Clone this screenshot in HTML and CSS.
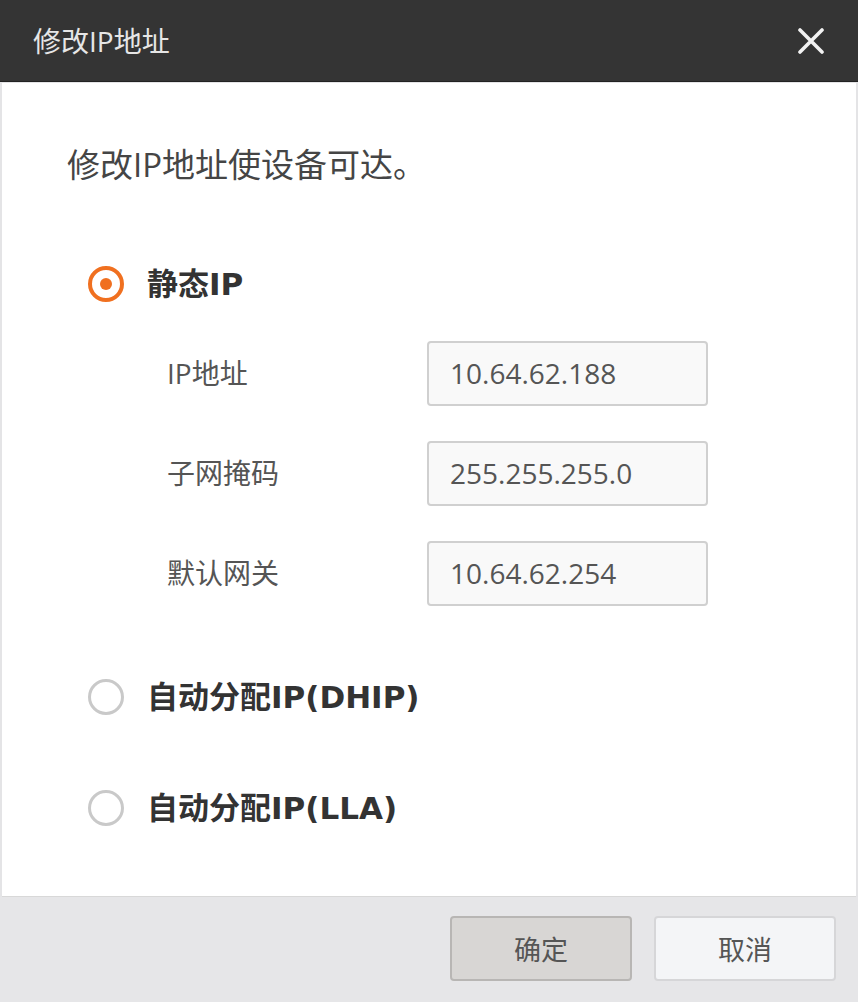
FILE: index.html
```html
<!DOCTYPE html>
<html lang="zh-CN">
<head>
<meta charset="utf-8">
<title>修改IP地址</title>
<link rel="stylesheet" href="styles.css">
</head>
<body>
<div class="dialog">
  <header class="dlg-header">
    <span class="dlg-title">修改IP地址</span>
    <svg class="dlg-close" width="26" height="26" viewBox="0 0 26 26" aria-hidden="true">
      <path d="M2 2 L24 24 M24 2 L2 24" stroke="#f2f2f2" stroke-width="3.6" stroke-linecap="round" fill="none"/>
    </svg>
  </header>
  <main class="dlg-body">
    <p class="desc">修改IP地址使设备可达。</p>

    <div class="option">
      <span class="radio checked"></span>
      <span class="opt-label">静态IP</span>
    </div>

    <div class="fields">
      <div class="field">
        <span class="field-label">IP地址</span>
        <div class="input">10.64.62.188</div>
      </div>
      <div class="field">
        <span class="field-label">子网掩码</span>
        <div class="input">255.255.255.0</div>
      </div>
      <div class="field">
        <span class="field-label">默认网关</span>
        <div class="input">10.64.62.254</div>
      </div>
    </div>

    <div class="option opt-dhip">
      <span class="radio"></span>
      <span class="opt-label">自动分配IP(DHIP)</span>
    </div>

    <div class="option opt-lla">
      <span class="radio"></span>
      <span class="opt-label">自动分配IP(LLA)</span>
    </div>
  </main>
  <footer class="dlg-footer">
    <button class="btn btn-ok">确定</button>
    <button class="btn btn-cancel">取消</button>
  </footer>
</div>
</body>
</html>
```

FILE: styles.css
```css
html, body {
  margin: 0;
  padding: 0;
}
body {
  width: 858px;
  height: 1002px;
  background: #e4e4e6;
  font-family: "Open Sans", "Noto Sans CJK SC", sans-serif;
  overflow: hidden;
}
.dialog {
  display: flex;
  flex-direction: column;
  height: 1002px;
}
.dlg-header {
  height: 81px;
  background: #343434;
  border-bottom: 1px solid #222;
  display: flex;
  align-items: center;
  justify-content: space-between;
  padding: 0 34px 0 33px;
  flex: none;
}
.dlg-title {
  color: #e6e6e6;
  font-size: 28px;
  line-height: 34px;
  font-family: "Open Sans", "Noto Sans CJK SC", sans-serif;
}
.dlg-close {
  display: block;
}
.dlg-body {
  background: #fff;
  margin: 1px 2px 0 2px;
  height: 813px;
  padding: 0 0 0 65px;
  flex: none;
  border-bottom: 1px solid #d8d8d8;
}
.desc {
  margin: 0;
  padding-top: 61px;
  font-size: 33px;
  line-height: 42px;
  color: #454545;
}
.option {
  display: flex;
  align-items: center;
  height: 40px;
  margin-left: 21px;
  margin-top: 78px;
}
.radio {
  box-sizing: border-box;
  width: 36px;
  height: 36px;
  border-radius: 50%;
  border: 3px solid #c9c9c9;
  background: #fff;
  flex: none;
  display: flex;
  align-items: center;
  justify-content: center;
}
.radio.checked {
  border: 4px solid #f07020;
}
.radio.checked::after {
  content: "";
  width: 12px;
  height: 12px;
  border-radius: 50%;
  background: #f07020;
}
.opt-label {
  margin-left: 23px;
  font-family: "DejaVu Sans", "Noto Sans CJK SC", sans-serif;
  font-weight: bold;
  font-size: 31px;
  line-height: 40px;
  color: #333;
}
.fields {
  display: flex;
  flex-direction: column;
  gap: 36px;
  margin-top: 37px;
  margin-left: 100px;
}
.field {
  display: flex;
  align-items: center;
  height: 64px;
}
.field-label {
  width: 260px;
  font-size: 28px;
  line-height: 36px;
  color: #555;
}
.input {
  box-sizing: border-box;
  width: 281px;
  height: 65px;
  border: 2px solid #d0d0d0;
  border-radius: 4px;
  background: #f9f9f9;
  padding-left: 21px;
  display: flex;
  align-items: center;
  font-size: 28px;
  color: #555;
}
.opt-dhip {
  margin-top: 72px;
}
.opt-lla {
  margin-top: 71px;
}
.dlg-footer {
  flex: 1;
  background: #e6e6e8;
  display: flex;
  justify-content: flex-end;
  align-items: flex-start;
  gap: 22px;
  padding: 19px 22px 0 0;
}
.btn {
  box-sizing: border-box;
  width: 182px;
  height: 65px;
  border-radius: 4px;
  font-family: "Open Sans", "Noto Sans CJK SC", sans-serif;
  font-size: 27px;
  color: #555;
  padding: 0;
}
.btn-ok {
  background: #d8d6d4;
  border: 2px solid #b8b6b4;
}
.btn-cancel {
  background: #f4f5f7;
  border: 2px solid #d6d6d8;
}
```
